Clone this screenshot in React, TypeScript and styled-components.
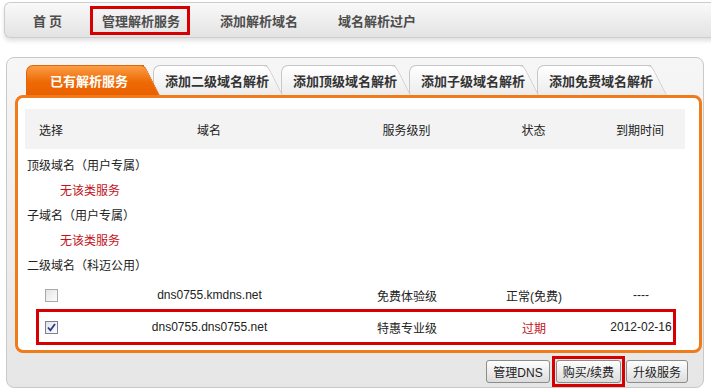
import React from 'react';
import styled, { createGlobalStyle } from 'styled-components';

const GlobalStyle = createGlobalStyle`
  html, body {
    margin: 0;
    padding: 0;
    background: #fff;
  }
  body {
    font-family: 'Liberation Sans', 'Noto Sans CJK SC', sans-serif;
    font-size: 12px;
    color: #222;
  }
`;

const Page = styled.div`
  width: 711px;
  height: 389px;
  overflow: hidden;
  padding-top: 2px;
  box-sizing: border-box;
`;

const NavBar = styled.nav`
  display: flex;
  align-items: center;
  height: 36px;
  box-sizing: border-box;
  margin: 0 -10px 0 4px;
  padding-left: 7px;
  border: 1px solid #cdcdcd;
  border-right: none;
  border-radius: 6px 0 0 6px;
  background: linear-gradient(#f9f9f9, #e3e3e3);
  box-shadow: 0 3px 4px rgba(0, 0, 0, 0.12);
`;

const NavItem = styled.div<{ $marked?: boolean }>`
  display: flex;
  align-items: center;
  height: 29px;
  box-sizing: border-box;
  margin: 0 9px;
  padding: 0 7px 0 9px;
  border: 3px solid ${(p) => (p.$marked ? '#d60000' : 'transparent')};
  font: bold 13px 'Noto Sans CJK SC', sans-serif;
  color: #4d4d4d;
  white-space: nowrap;
`;

const Panel = styled.section`
  width: 698px;
  height: 331px;
  box-sizing: border-box;
  margin: 19px 0 0 6px;
  padding: 7px 0 0 8px;
  border: 1px solid #c9c9c9;
  border-radius: 8px;
  background: linear-gradient(#f6f6f6, #e6e6e6);
`;

const TabRow = styled.div`
  display: flex;
  height: 30px;
  margin-left: 11px;
`;

const Tab = styled.div<{ $active?: boolean; $order: number }>`
  position: relative;
  z-index: ${(p) => (p.$active ? 20 : 10 - p.$order)};
  width: ${(p) => (p.$active ? 134 : 130)}px;
  margin-right: ${(p) => (p.$active ? -7 : -2)}px;
  height: 30px;
  box-sizing: border-box;
  padding-right: ${(p) => (p.$active ? 8 : 2)}px;
  display: flex;
  align-items: center;
  justify-content: center;
  font: bold 13px 'Noto Sans CJK SC', sans-serif;
  color: ${(p) => (p.$active ? '#fff' : '#333')};
  white-space: nowrap;

  &::before,
  &::after {
    content: '';
    position: absolute;
    top: 0;
    bottom: 0;
    z-index: -1;
    background: ${(p) =>
      p.$active
        ? 'linear-gradient(#fb9d45, #ee6a05 55%, #ea6000)'
        : 'linear-gradient(#ffffff, #ececec)'};
    border: 1px solid ${(p) => (p.$active ? '#e0650c' : '#c8c8c8')};
    border-bottom: none;
  }
  &::before {
    left: 0;
    right: 16px;
    border-right: none;
    border-radius: 7px 0 0 0;
  }
  &::after {
    right: 0;
    width: 30px;
    border-left: none;
    border-radius: 0 5px 0 0;
    transform: skewX(27deg);
    transform-origin: 0 100%;
  }
`;

const ContentBox = styled.div`
  width: 687px;
  box-sizing: border-box;
  padding: 11px 14px 5px 7px;
  border: 3px solid #f07b1b;
  border-radius: 8px;
  background: #fff;
`;

const HeaderRow = styled.div`
  display: grid;
  grid-template-columns: 52px 264px 131px 123px 1fr;
  align-items: center;
  justify-items: center;
  height: 40px;
  margin-bottom: 3px;
  background: #f3f3f3;
  font: 12px 'Noto Sans CJK SC', sans-serif;
  color: #222;
`;

const GroupTitle = styled.div`
  height: 25px;
  padding-left: 2px;
  font: 12px/25px 'Noto Sans CJK SC', sans-serif;
  color: #222;
`;

const EmptyNote = styled.div`
  height: 25px;
  padding-left: 35px;
  font: 12px/25px 'Noto Sans CJK SC', sans-serif;
  color: #c3141c;
`;

const DataRow = styled.div<{ $marked?: boolean }>`
  display: grid;
  grid-template-columns: 25px 291px 104px 150px 1fr;
  align-items: center;
  justify-items: center;
  height: ${(p) => (p.$marked ? 36 : 32)}px;
  box-sizing: border-box;
  padding-top: ${(p) => (p.$marked ? 0 : 4)}px;
  margin: 0 9px 0 11px;
  border: 3px solid ${(p) => (p.$marked ? '#d60000' : 'transparent')};
  border-top-width: ${(p) => (p.$marked ? 3 : 0)}px;
  border-bottom-width: ${(p) => (p.$marked ? 3 : 0)}px;
  font: 12px 'Liberation Sans', 'Noto Sans CJK SC', sans-serif;
  color: #222;
`;

const Cell = styled.span<{ $alert?: boolean }>`
  color: ${(p) => (p.$alert ? '#c3141c' : 'inherit')};
  white-space: nowrap;
`;

const Box = styled.span<{ $checked?: boolean }>`
  display: flex;
  align-items: center;
  justify-content: center;
  width: 13px;
  height: 13px;
  box-sizing: border-box;
  border: 1px solid ${(p) => (p.$checked ? '#7a7f9c' : '#a9a9a9')};
  background: linear-gradient(135deg, #e4e4e4, #fdfdfd);
`;

const ButtonRow = styled.div`
  display: flex;
  justify-content: flex-end;
  align-items: center;
  height: 31px;
  margin-top: 3px;
  padding-right: 15px;
`;

const Button = styled.button`
  height: 23px;
  padding: 0 6px;
  border: 1px solid #8c8c8c;
  border-radius: 3px;
  background: linear-gradient(#fefefe, #dcdcdc);
  font: 12px 'Liberation Sans', 'Noto Sans CJK SC', sans-serif;
  color: #222;
  white-space: nowrap;
`;

const RedFrame = styled.div`
  display: flex;
  padding: 1px;
  margin: 0 1px 0 2px;
  border: 3px solid #d60000;
`;

function Checkbox({ checked }: { checked?: boolean }) {
  return (
    <Box $checked={checked}>
      {checked && (
        <svg width="9" height="9" viewBox="0 0 9 9">
          <path d="M1 4.5 L3.4 7.3 L8 1" fill="none" stroke="#2b3a8c" strokeWidth="1.8" />
        </svg>
      )}
    </Box>
  );
}

const tabs = ['已有解析服务', '添加二级域名解析', '添加顶级域名解析', '添加子级域名解析', '添加免费域名解析'];

export default function App() {
  return (
    <Page>
      <GlobalStyle />
      <NavBar>
        <NavItem>首 页</NavItem>
        <NavItem $marked>管理解析服务</NavItem>
        <NavItem>添加解析域名</NavItem>
        <NavItem>域名解析过户</NavItem>
      </NavBar>

      <Panel>
        <TabRow>
          {tabs.map((t, i) => (
            <Tab key={t} $active={i === 0} $order={i}>
              {t}
            </Tab>
          ))}
        </TabRow>

        <ContentBox>
          <HeaderRow>
            <span>选择</span>
            <span>域名</span>
            <span>服务级别</span>
            <span>状态</span>
            <span>到期时间</span>
          </HeaderRow>
          <GroupTitle>顶级域名（用户专属）</GroupTitle>
          <EmptyNote>无该类服务</EmptyNote>
          <GroupTitle>子域名（用户专属）</GroupTitle>
          <EmptyNote>无该类服务</EmptyNote>
          <GroupTitle>二级域名（科迈公用）</GroupTitle>
          <DataRow>
            <Checkbox />
            <Cell>dns0755.kmdns.net</Cell>
            <Cell>免费体验级</Cell>
            <Cell>正常(免费)</Cell>
            <Cell>----</Cell>
          </DataRow>
          <DataRow $marked>
            <Checkbox checked />
            <Cell>dns0755.dns0755.net</Cell>
            <Cell>特惠专业级</Cell>
            <Cell $alert>过期</Cell>
            <Cell>2012-02-16</Cell>
          </DataRow>
        </ContentBox>

        <ButtonRow>
          <Button>管理DNS</Button>
          <RedFrame>
            <Button>购买/续费</Button>
          </RedFrame>
          <Button>升级服务</Button>
        </ButtonRow>
      </Panel>
    </Page>
  );
}
